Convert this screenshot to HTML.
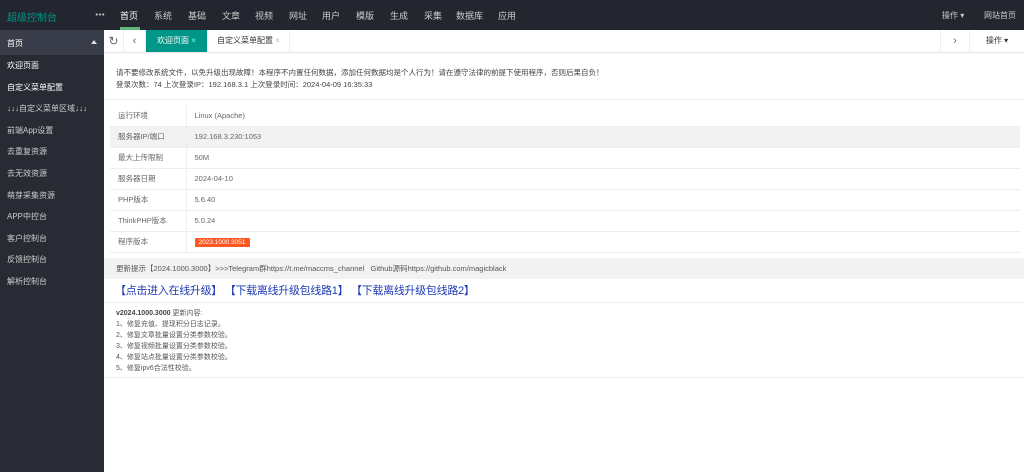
<!DOCTYPE html>
<html><head><meta charset="utf-8"><style>
*{margin:0;padding:0;box-sizing:border-box}
body{width:1024px;height:472px;overflow:hidden;background:#fff;font-family:"Liberation Sans","Noto Sans CJK SC",sans-serif;font-size:8px;color:#555;position:relative}
.top{position:absolute;left:0;top:0;width:1024px;height:30px;background:#23262e}
.logo{position:absolute;left:7px;top:9px;color:#009688;font-size:10px}
.dots{position:absolute;left:95px;top:13px;width:10px;height:3px;background:radial-gradient(circle,#ccc 0.9px,transparent 1.1px) 0 0/3.3px 3px repeat-x}
.nav span{position:absolute;top:9px;color:#ccc;font-size:9px}
.nav span.a{color:#fff}
.navb{position:absolute;left:120px;top:27px;width:20px;height:3px;background:#5fb878}
.tr{position:absolute;top:10px;color:#ccc;font-size:8px}
.side{position:absolute;left:0;top:30px;width:104px;height:442px;background:#282b33}
.side .h{height:25px;background:#393d49;color:#fff;padding:8px 0 0 7px;position:relative}
.side .h:after{content:"";position:absolute;right:7px;top:10px;border:3px solid transparent;border-bottom:4px solid #ddd;border-top:0}
.side div.i{height:21.6px;line-height:21.6px;padding-left:7px;color:#ccc}
.side div.w{color:#fff}
.tabs{position:absolute;left:104px;top:30px;width:920px;height:23px;border-bottom:1px solid #e6e6e6;background:#fff}
.tabs div{position:absolute;top:0;height:22px;line-height:22px;font-size:8px;border-right:1px solid #eee;text-align:center}
.card{position:absolute;left:104px;width:920px}
table{border-collapse:collapse;width:910px;margin-left:6px}
td{height:21px;border-bottom:1px solid #eee;padding-left:8px;color:#666;font-size:7.5px}
td:first-child{width:76px;border-right:1px solid #eee}
tr.g td{background:#f2f2f2}
.badge{background:#ff5722;color:#fff;padding:1px 4px;border-radius:1px;font-size:6.5px}
</style></head><body>
<div class="top">
<div class="logo">超级控制台</div><div class="dots"></div>
<div class="nav"><span class="a" style="left:120px">首页</span><span style="left:154px">系统</span><span style="left:188px">基础</span><span style="left:222px">文章</span><span style="left:255px">视频</span><span style="left:289px">网址</span><span style="left:322px">用户</span><span style="left:356px">模版</span><span style="left:390px">生成</span><span style="left:424px">采集</span><span style="left:456px">数据库</span><span style="left:498px">应用</span></div>
<div class="navb"></div>
<div class="tr" style="left:942px">操作 ▾</div><div class="tr" style="left:984px">网站首页</div>
</div>
<div class="side">
<div class="h">首页</div>
<div class="i w">欢迎页面</div><div class="i w">自定义菜单配置</div><div class="i">↓↓↓自定义菜单区域↓↓↓</div><div class="i">前端App设置</div><div class="i">去重复资源</div><div class="i">去无效资源</div><div class="i">萌芽采集资源</div><div class="i">APP中控台</div><div class="i">客户控制台</div><div class="i">反馈控制台</div><div class="i">解析控制台</div>
</div>
<div class="tabs">
<div style="left:0;width:20px;font-size:12px;color:#666">↻</div>
<div style="left:20px;width:22px;font-size:11px;color:#666">‹</div>
<div style="left:42px;width:62px;background:#009688;color:#fff">欢迎页面 <span style="color:#8fd">×</span></div>
<div style="left:104px;width:82px;color:#333">自定义菜单配置 <span style="color:#bbb">×</span></div>
<div style="left:836px;width:30px;border-left:1px solid #eee;font-size:11px;color:#666">›</div>
<div style="left:866px;width:54px;border:0;color:#333">操作 ▾</div>
</div>
<div class="card" style="top:67px;padding-left:12px;line-height:12px;color:#444;font-size:7.5px">请不要修改系统文件，以免升级出现故障！本程序不内置任何数据，添加任何数据均是个人行为！请在遵守法律的前提下使用程序，否则后果自负！<br>登录次数：74 上次登录IP：192.168.3.1 上次登录时间：2024-04-09 16:35:33</div>
<div class="card" style="top:99px;height:1px;background:#eee"></div>
<div class="card" style="top:105px">
<table>
<tr><td>运行环境</td><td>Linux (Apache)</td></tr>
<tr class="g"><td>服务器IP/端口</td><td>192.168.3.230:1053</td></tr>
<tr><td>最大上传限制</td><td>50M</td></tr>
<tr><td>服务器日期</td><td>2024-04-10</td></tr>
<tr><td>PHP版本</td><td>5.6.40</td></tr>
<tr><td>ThinkPHP版本</td><td>5.0.24</td></tr>
<tr><td>程序版本</td><td><span class="badge">2023.1000.3051</span></td></tr>
</table></div>
<div class="card" style="top:258px;height:21px;background:#f2f2f2;line-height:21px;padding-left:12px;font-size:7.5px;color:#555">更新提示【2024.1000.3000】&gt;&gt;&gt;Telegram群https://t.me/maccms_channel &nbsp; Github源码https://github.com/magicblack</div>
<div class="card" style="top:283px;padding-left:11px;color:#1e3bb3;font-size:11px;line-height:16px;letter-spacing:-0.3px">【点击进入在线升级】 【下载离线升级包线路1】 【下载离线升级包线路2】</div>
<div class="card" style="top:302px;height:1px;background:#eee"></div>
<div class="card" style="top:308px;padding-left:12px;font-size:7px;line-height:11px;color:#555"><b style="color:#444">v2024.1000.3000</b> 更新内容:<br>1、修复充值、提现积分日志记录。<br>2、修复文章批量设置分类参数校验。<br>3、修复视频批量设置分类参数校验。<br>4、修复站点批量设置分类参数校验。<br>5、修复ipv6合法性校验。</div>
<div class="card" style="top:377px;height:1px;background:#eee"></div>
</body></html>
